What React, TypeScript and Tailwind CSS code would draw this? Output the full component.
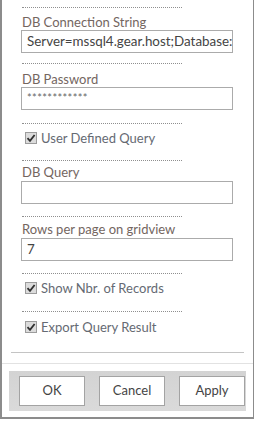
import React from 'react';

const font = { fontFamily: 'Lato, "Noto Sans", Arial, sans-serif' };

// dotted separator between the fields
const Dots = ({ className = '' }: { className?: string }) => (
  <div className={`ml-[1px] w-[160px] border-t border-dotted border-[#8f8f8f] ${className}`} />
);

const Label = ({ text, className }: { text: string; className: string }) => (
  <div className={`pl-[1px] text-[13px] leading-[16px] text-[#74665f] ${className}`}>{text}</div>
);

const TextBox = ({ value, small }: { value: string; small?: boolean }) => (
  <div
    className={`h-[23px] w-[212px] overflow-hidden whitespace-nowrap border border-[#ababab] bg-white pl-[5px] text-[#444] ${
      small ? 'text-[11px] leading-[20px] tracking-[0.4px] text-[#666]' : 'text-[13.4px] leading-[21px]'
    }`}
  >
    {value}
  </div>
);

const CheckRow = ({ label, className }: { label: string; className: string }) => (
  <div className={`flex items-center gap-[4px] pl-[4px] ${className}`}>
    <span className="flex h-[12px] w-[12px] items-center justify-center border border-[#9c9c9c] bg-[#dcdcdc]">
      <svg width="10" height="10" viewBox="0 0 10 10">
        <path d="M1.5 5.2 L4 7.8 L8.6 2" fill="none" stroke="#2f2f2f" strokeWidth="1.8" />
      </svg>
    </span>
    <span className="text-[13px] leading-[16px] text-[#656a73]">{label}</span>
  </div>
);

const Btn = ({ text }: { text: string }) => (
  <button className="h-[30px] w-[66px] border border-[#a3a3a3] bg-white text-[13px] text-[#444]">
    {text}
  </button>
);

export default function App() {
  return (
    <div className="h-[421px] w-[257px] bg-white" style={font}>
      <div className="flex h-[419px] w-[254px] flex-col border-b-2 border-l-2 border-r border-[#8c8c8c] bg-white">
        <div className="flex flex-col pl-[19px] pt-[7px]">
          <Dots />
          <Label text="DB Connection String" className="h-[22px] pt-[6px]" />
          <TextBox value="Server=mssql4.gear.host;Database:" />

          <Dots className="mt-[10px]" />
          <Label text="DB Password" className="h-[23px] pt-[7px]" />
          <TextBox value="************" small />

          <Dots className="mt-[13px]" />
          <CheckRow label="User Defined Query" className="h-[28px]" />

          <Dots className="mt-[8px]" />
          <Label text="DB Query" className="h-[20px] pt-[3px]" />
          <TextBox value="" />

          <Dots className="mt-[12px]" />
          <Label text="Rows per page on gridview" className="h-[21px] pt-[4px]" />
          <TextBox value="7" />

          <Dots className="mt-[12px]" />
          <CheckRow label="Show Nbr. of Records" className="h-[28px]" />

          <Dots className="mt-[9px]" />
          <CheckRow label="Export Query Result" className="h-[30px]" />
        </div>

        <div className="ml-[9px] mt-[10px] h-px w-[233px] bg-[#c4c4c4]" />
        <div className="mt-[10px] h-px w-full bg-[#e2e2e2]" />

        <div className="ml-[7px] mt-[7px] flex h-[40px] w-[237px] items-start justify-end gap-[14px] bg-gradient-to-b from-[#d3d3d3] to-[#dadada] pr-[1px] pt-[5px]">
          <Btn text="OK" />
          <Btn text="Cancel" />
          <Btn text="Apply" />
        </div>
      </div>
    </div>
  );
}
